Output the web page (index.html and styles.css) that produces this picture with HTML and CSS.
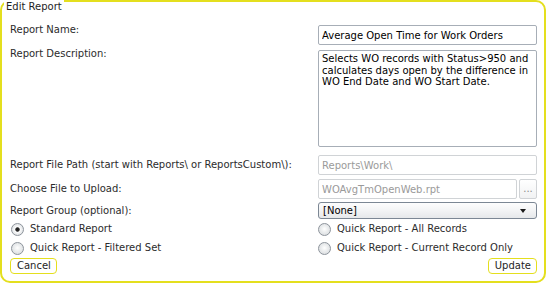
FILE: index.html
```html
<!DOCTYPE html>
<html>
<head>
<meta charset="utf-8">
<title>Edit Report</title>
<link rel="stylesheet" href="styles.css">
</head>
<body>
<fieldset class="panel">
  <legend class="panel-title">Edit Report</legend>
  <div class="row row-first">
    <label class="lbl lbl-top">Report Name:</label>
    <input class="field" type="text" value="Average Open Time for Work Orders">
  </div>
  <div class="row row-desc">
    <label class="lbl lbl-top2">Report Description:</label>
    <textarea class="field area">Selects WO records with Status&gt;950 and
calculates days open by the difference in
WO End Date and WO Start Date.</textarea>
  </div>
  <div class="row row-path">
    <label class="lbl">Report File Path (start with Reports\ or ReportsCustom\):</label>
    <input class="field dim" type="text" value="Reports\Work\" disabled>
  </div>
  <div class="row row-file">
    <label class="lbl">Choose File to Upload:</label>
    <div class="upload">
      <input class="field dim grow" type="text" value="WOAvgTmOpenWeb.rpt" disabled>
      <button class="browse" type="button">...</button>
    </div>
  </div>
  <div class="row row-group">
    <label class="lbl">Report Group (optional):</label>
    <div class="select"><span class="select-text">[None]</span><span class="arrow"></span></div>
  </div>
  <div class="row row-radio">
    <label class="radio"><input type="radio" name="type" checked><span>Standard Report</span></label>
    <label class="radio radio-right"><input type="radio" name="type"><span>Quick Report - All Records</span></label>
  </div>
  <div class="row row-radio">
    <label class="radio"><input type="radio" name="type"><span>Quick Report - Filtered Set</span></label>
    <label class="radio radio-right"><input type="radio" name="type"><span>Quick Report - Current Record Only</span></label>
  </div>
  <div class="actions">
    <button class="btn" type="button">Cancel</button>
    <button class="btn" type="button">Update</button>
  </div>
</fieldset>
</body>
</html>
```
FILE: styles.css
```css
html, body {
  margin: 0;
  padding: 0;
  background: #ffffff;
}
body {
  font-family: "DejaVu Sans", Verdana, sans-serif;
  font-size: 10px;
  line-height: 12px;
  color: #2b2b2b;
  overflow: hidden;
}
.panel {
  box-sizing: border-box;
  width: 546px;
  margin: -11px 0 0 0;
  padding: 12px 7px 7px 8px;
  border: 2px solid #e4df1e;
  border-radius: 10px;
  min-width: 0;
}
.panel-title {
  margin-left: -6px;
  padding: 12px 2px 0 2px;
  line-height: 12px;
  color: #1e1e1e;
}
.row {
  display: flex;
  align-items: center;
}
.lbl {
  flex: 1;
  white-space: nowrap;
}
.lbl-top {
  align-self: flex-start;
  margin-top: -1px;
}
.lbl-top2 {
  align-self: flex-start;
  margin-top: -2px;
}
.field {
  box-sizing: border-box;
  width: 219px;
  height: 20px;
  margin: 0;
  padding: 0 3px;
  border: 1px solid #a7aeb7;
  border-radius: 2px;
  font-family: inherit;
  font-size: 10px;
  color: #000000;
  background: #ffffff;
  outline: none;
}
.dim {
  border-color: #d0d3d6;
  color: #9a9a9a;
  -webkit-text-fill-color: #9a9a9a;
}
.area {
  height: 97px;
  padding: 2px 3px;
  line-height: 11.5px;
  resize: none;
  overflow: hidden;
}
.row-desc { margin-top: 5px; }
.row-path { margin-top: 8px; }
.row-file { margin-top: 4px; }
.row-group { margin-top: 3px; }
.upload {
  display: flex;
  width: 219px;
  gap: 2px;
}
.grow {
  flex: 1;
  width: auto;
  min-width: 0;
}
.browse {
  box-sizing: border-box;
  width: 18px;
  height: 20px;
  margin: 0;
  padding: 0;
  border: 1px solid #d0d3d6;
  border-radius: 2px;
  background: linear-gradient(#ffffff, #f1f2f3);
  color: #8a8a8a;
  font-family: inherit;
  font-size: 10px;
  line-height: 14px;
}
.select {
  box-sizing: border-box;
  display: flex;
  align-items: center;
  justify-content: space-between;
  width: 219px;
  height: 17px;
  padding: 0 10px 0 4px;
  border: 1px solid #7c8794;
  border-radius: 3px;
  background: linear-gradient(#fdfdfd, #f3f4f5 50%, #e6e8ea);
  color: #000000;
}
.arrow {
  width: 0;
  height: 0;
  border-left: 3.5px solid transparent;
  border-right: 3.5px solid transparent;
  border-top: 4px solid #1a1a1a;
}
.row-radio {
  height: 18px;
  margin-top: 1px;
}
.radio {
  flex: 1;
  display: flex;
  align-items: center;
  gap: 6px;
  padding-left: 1px;
  white-space: nowrap;
}
.radio-right {
  flex: 0 0 219px;
  padding-left: 3px;
}
.radio input {
  -webkit-appearance: none;
  appearance: none;
  box-sizing: border-box;
  width: 13px;
  height: 13px;
  margin: 0;
  border: 1px solid #8d949c;
  border-radius: 50%;
  background: radial-gradient(circle at 50% 45%, #ffffff 0, #eef0f1 35%, #d3d6d9 100%);
}
.radio input:checked {
  background: radial-gradient(circle at 50% 50%, #1e1e1e 0, #2a2a2a 1.8px, #ffffff 2.6px, #f2f3f4 3.6px, #d3d6d9 100%);
}
.actions {
  display: flex;
  justify-content: space-between;
  margin-top: 1px;
}
.btn {
  box-sizing: border-box;
  height: 16px;
  margin: 0;
  padding: 0 5px 0 6px;
  border: 1.5px solid #e4df1e;
  border-radius: 4px;
  background: #ffffff;
  color: #1e1e1e;
  font-family: inherit;
  font-size: 10px;
  line-height: 12px;
}
```
